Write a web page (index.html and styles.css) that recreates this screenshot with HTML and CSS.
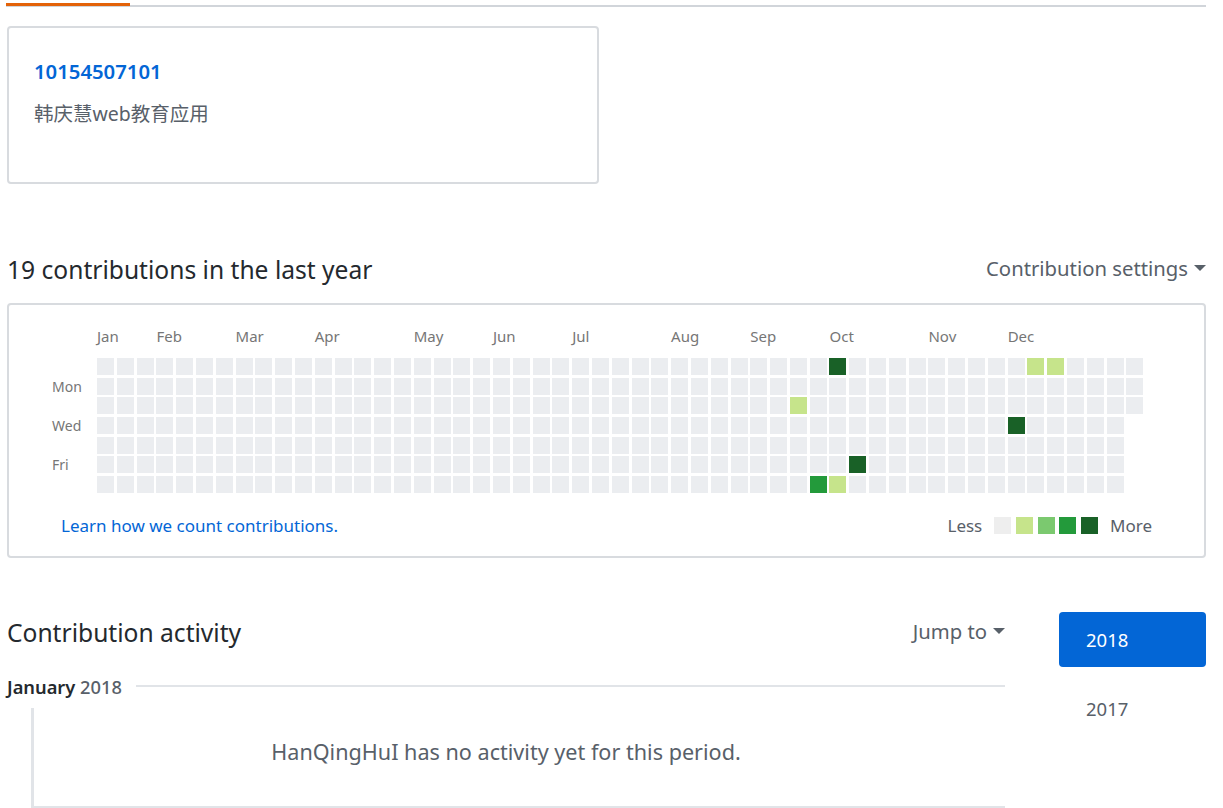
FILE: index.html
```html
<!DOCTYPE html>
<html lang="zh">
<head>
<meta charset="utf-8">
<title>HanQingHuI</title>
<link rel="stylesheet" href="styles.css">
</head>
<body>
<div class="page">
  <div class="tabnav"><span class="tab-active"></span></div>

  <div class="pinned">
    <a class="repo-name" href="#">10154507101</a>
    <p class="repo-desc">韩庆慧web教育应用</p>
  </div>

  <div class="contrib-head">
    <h2 class="section-title">19 contributions in the last year</h2>
    <div class="dropdown">Contribution settings <span class="caret"></span></div>
  </div>

  <div class="graph-box">
    <div class="graph-top">
      <div class="days-spacer"></div>
      <div class="months">
        <span class="month" style="grid-column: 1 / span 3">Jan</span>
        <span class="month" style="grid-column: 4 / span 3">Feb</span>
        <span class="month" style="grid-column: 8 / span 3">Mar</span>
        <span class="month" style="grid-column: 12 / span 3">Apr</span>
        <span class="month" style="grid-column: 17 / span 3">May</span>
        <span class="month" style="grid-column: 21 / span 3">Jun</span>
        <span class="month" style="grid-column: 25 / span 3">Jul</span>
        <span class="month" style="grid-column: 30 / span 3">Aug</span>
        <span class="month" style="grid-column: 34 / span 3">Sep</span>
        <span class="month" style="grid-column: 38 / span 3">Oct</span>
        <span class="month" style="grid-column: 43 / span 3">Nov</span>
        <span class="month" style="grid-column: 47 / span 3">Dec</span>
      </div>
    </div>
    <div class="graph-body">
      <div class="days">
        <span></span><span>Mon</span><span></span><span>Wed</span><span></span><span>Fri</span><span></span>
      </div>
      <div class="cells" id="cells"></div>
    </div>
    <div class="graph-foot">
      <a class="learn" href="#">Learn how we count contributions.</a>
      <div class="legend">
        <span class="legend-text">Less</span>
        <span class="sq lg0"></span>
        <span class="sq l1"></span>
        <span class="sq l2"></span>
        <span class="sq l3"></span>
        <span class="sq l4"></span>
        <span class="legend-text more">More</span>
      </div>
    </div>
  </div>

  <div class="activity">
    <div class="activity-main">
      <div class="activity-head">
        <h2 class="section-title">Contribution activity</h2>
        <div class="dropdown">Jump to <span class="caret"></span></div>
      </div>
      <div class="period">
        <h3 class="period-title"><span class="period-month">January</span> <span class="period-year">2018</span></h3>
        <span class="period-line"></span>
      </div>
      <div class="timeline">
        <div class="empty-msg">HanQingHuI has no activity yet for this period.</div>
      </div>
    </div>
    <div class="years">
      <a class="year selected" href="#">2018</a>
      <a class="year" href="#">2017</a>
    </div>
  </div>
</div>
<script src="script.js"></script>
</body>
</html>
```

FILE: styles.css
```css
* { box-sizing: border-box; }
html, body { margin: 0; padding: 0; background: #fff; }
body {
  font-family: "Noto Sans", "Noto Sans CJK SC", sans-serif;
  color: #24292e;
  overflow: hidden;
  height: 808px;
}
a { text-decoration: none; }

.page {
  width: 1199px;
  margin-left: 7px;
}

.tabnav {
  height: 7px;
  padding-top: 4px;
  border-bottom: 2px solid #d1d5da;
  margin-left: -1px;
  position: relative;
}
.tab-active {
  position: absolute;
  left: 0;
  top: 3px;
  width: 124px;
  height: 3px;
  background: #e36209;
}

.pinned {
  margin-top: 19px;
  width: 592px;
  height: 158px;
  border: 2px solid #d8dbdf;
  border-radius: 4px;
  padding: 28px 25px 0;
}
.repo-name {
  display: block;
  font-size: 20.3px;
  font-weight: 600;
  color: #0366d6;
  line-height: 30px;
}
.repo-desc {
  margin: 14px 0 0;
  font-size: 19.5px;
  line-height: 28px;
  color: #586069;
}

.contrib-head, .activity-head {
  display: flex;
  justify-content: space-between;
  align-items: center;
}
.contrib-head {
  margin-top: 70px;
  height: 32px;
}
.section-title {
  margin: 0;
  font-size: 24.6px;
  font-weight: 400;
  line-height: 32px;
  color: #24292e;
}
.dropdown {
  font-size: 20.3px;
  color: #586069;
  line-height: 28px;
  display: flex;
  align-items: center;
  gap: 6px;
  margin-top: -4px;
}
.caret {
  width: 0;
  height: 0;
  border-left: 6px solid transparent;
  border-right: 6px solid transparent;
  border-top: 6px solid #586069;
  display: inline-block;
}

.graph-box {
  margin-top: 17px;
  height: 255px;
  border: 2px solid #d8dbdf;
  border-radius: 4px;
  padding: 20px 0 0 43px;
}
.graph-top, .graph-body {
  display: flex;
}
.days-spacer, .days {
  width: 45px;
  flex: none;
}
.months {
  display: grid;
  grid-template-columns: repeat(53, 17px);
  column-gap: 2.8px;
  height: 22px;
}
.month {
  font-size: 15px;
  line-height: 22px;
  color: #767676;
  white-space: nowrap;
}
.graph-body {
  margin-top: 11px;
}
.days {
  display: grid;
  grid-template-rows: repeat(7, 17px);
  row-gap: 2.7px;
}
.days span {
  font-size: 14px;
  line-height: 17px;
  color: #767676;
}
.cells {
  display: grid;
  grid-template-rows: repeat(7, 17px);
  grid-auto-columns: 17px;
  grid-auto-flow: column;
  column-gap: 2.8px;
  row-gap: 2.7px;
}
.day { background: #ebedf0; }
.day.l1, .sq.l1 { background: #c6e48b; }
.day.l2, .sq.l2 { background: #7bc96f; }
.day.l3, .sq.l3 { background: #239a3b; }
.day.l4, .sq.l4 { background: #196127; }

.graph-foot {
  display: flex;
  justify-content: space-between;
  align-items: center;
  margin: 19px 52px 0 9px;
  height: 26px;
}
.learn {
  font-size: 17px;
  color: #0366d6;
}
.legend {
  display: flex;
  align-items: center;
}
.legend-text {
  font-size: 17px;
  color: #586069;
  margin-right: 12px;
}
.legend-text.more {
  margin: 0 0 0 12px;
}
.sq {
  width: 17px;
  height: 17px;
  margin-right: 4.7px;
}
.sq.l4 { margin-right: 0; }
.sq.lg0 { background: #eeeeee; }

.activity {
  margin-top: 59px;
  display: flex;
}
.activity-main {
  width: 998px;
  flex: none;
}
.activity-head {
  height: 32px;
}
.period {
  display: flex;
  align-items: center;
  margin-top: 25px;
  height: 26px;
}
.period-title {
  margin: 0;
  font-size: 18.3px;
  font-weight: 600;
  white-space: nowrap;
  line-height: 26px;
}
.period-month { color: #24292e; }
.period-year { color: #586069; font-weight: 500; }
.period-line {
  flex: 1;
  height: 2px;
  background: #e1e4e8;
  margin-left: 14px;
  margin-top: -2px;
}
.timeline {
  margin: 8px 0 0 24px;
  padding-right: 27px;
  border-left: 3px solid #e1e4e8;
  border-bottom: 2px solid #e1e4e8;
  height: 100px;
  display: flex;
  align-items: center;
  justify-content: center;
}
.empty-msg {
  font-size: 21.6px;
  color: #586069;
  margin-top: -12px;
}

.years {
  padding-left: 54px;
  flex: 1;
  display: flex;
  flex-direction: column;
  margin-top: -5px;
}
.year {
  display: block;
  height: 55px;
  line-height: 55px;
  padding-left: 27px;
  font-size: 18.5px;
  color: #586069;
  border-radius: 4px;
}
.year.selected {
  background: #0366d6;
  color: #fff;
  margin-bottom: 14px;
}
```

FILE: script.js
```js
var levels = { "35-2": 1, "36-6": 3, "37-0": 4, "37-6": 1, "38-5": 4, "46-3": 4, "47-0": 1, "48-0": 1 };
var grid = document.getElementById("cells");
for (var c = 0; c < 53; c++) {
  var rows = c === 52 ? 3 : 7;
  for (var r = 0; r < rows; r++) {
    var d = document.createElement("span");
    d.className = "day l" + (levels[c + "-" + r] || 0);
    grid.appendChild(d);
  }
}
```
